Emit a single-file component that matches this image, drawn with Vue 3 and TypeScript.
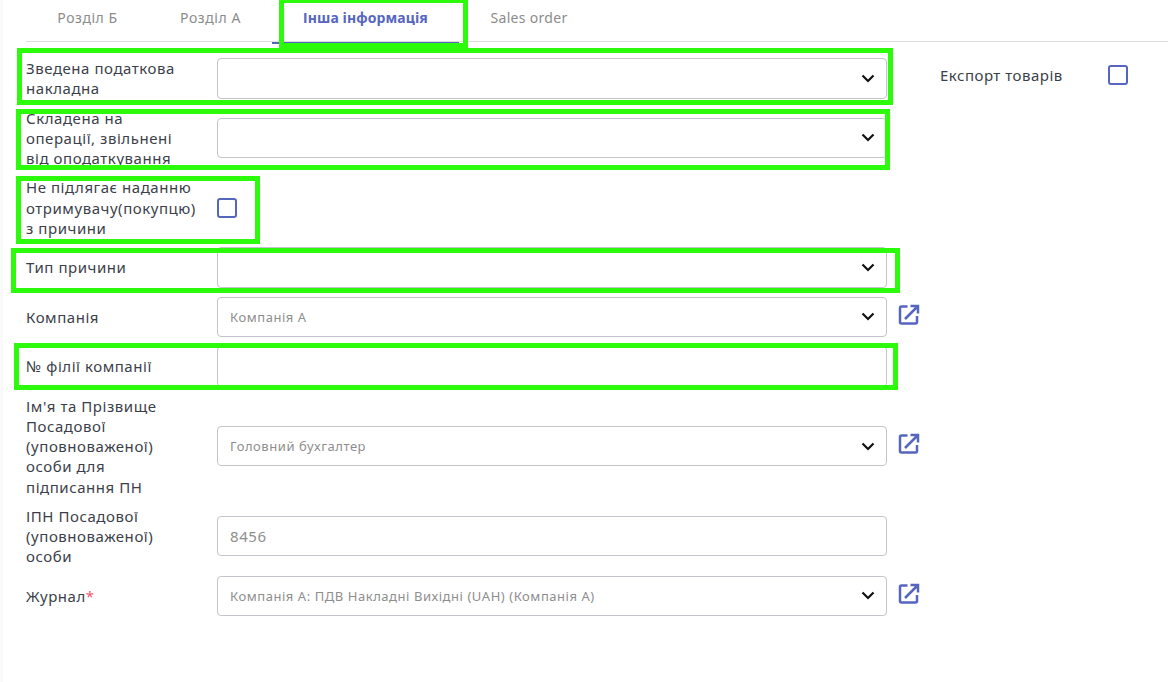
<script setup lang="ts">
interface Row {
  label: string
  kind: 'select' | 'input' | 'check'
  value?: string
  link?: boolean
  big?: boolean
  required?: boolean
}
const tabs = ['Розділ Б', 'Розділ А', 'Інша інформація', 'Sales order']
const rows: Row[] = [
  { label: 'Зведена податкова\nнакладна', kind: 'select' },
  { label: 'Складена на\nоперації, звільнені\nвід оподаткування', kind: 'select' },
  { label: 'Не підлягає наданню\nотримувачу(покупцю)\nз причини', kind: 'check' },
  { label: 'Тип причини', kind: 'select' },
  { label: 'Компанія', kind: 'select', value: 'Компанія А', link: true },
  { label: '№ філії компанії', kind: 'input' },
  { label: "Ім'я та Прізвище\nПосадової\n(уповноваженої)\nособи для\nпідписання ПН", kind: 'select', value: 'Головний бухгалтер', link: true },
  { label: 'ІПН Посадової\n(уповноваженої)\nособи', kind: 'input', value: '8456', big: true },
  { label: 'Журнал', kind: 'select', value: 'Компанія А: ПДВ Накладні Вихідні (UAH) (Компанія А)', link: true, required: true },
]
</script>

<template>
  <div class="page">
    <nav class="tabs">
      <span v-for="(t, i) in tabs" :key="t" class="tab" :class="{ active: i === 2 }">{{ t }}</span>
    </nav>
    <div class="body">
      <div class="form">
        <div v-for="r in rows" :key="r.label" class="row">
          <div class="label">{{ r.label }}<span v-if="r.required" class="req">*</span></div>
          <span v-if="r.kind === 'check'" class="check"></span>
          <div v-else class="field">
            <span class="value" :class="{ big: r.big }">{{ r.value }}</span>
            <svg v-if="r.kind === 'select'" class="chev" width="14" height="9" viewBox="0 0 14 9">
              <path d="M1.500 1.500 7 7l5.500-5.500" fill="none" stroke="#111" stroke-width="2.200" />
            </svg>
          </div>
          <svg v-if="r.link" class="ext" width="22" height="22" viewBox="0 0 22 22">
            <path d="M9.500 2.500H3.500a1.500 1.500 0 0 0-1.500 1.500v14a1.500 1.500 0 0 0 1.500 1.500h14a1.500 1.500 0 0 0 1.500-1.500V12" fill="none" stroke="#5666bf" stroke-width="2.500" />
            <path d="M7 15 19 3M12.500 2H20v7.500" fill="none" stroke="#5666bf" stroke-width="2.500" />
          </svg>
        </div>
      </div>
      <div class="side">
        <span class="side-label">Експорт товарів</span>
        <span class="check"></span>
      </div>
    </div>
    <i class="mark m1"></i>
    <i class="mark m2"></i>
    <i class="mark m3"></i>
    <i class="mark m4"></i>
    <i class="mark m5"></i>
    <i class="mark m6"></i>
  </div>
</template>

<style scoped>
.page {
  position: relative;
  width: 1168px;
  height: 682px;
  overflow: hidden;
  background: #fff;
  font-family: "Noto Sans", "Open Sans", sans-serif;
  font-size: 15px;
  color: #3c3f4a;
  box-sizing: border-box;
  border-left: 3px solid #fafafa;
}
.tabs {
  display: flex;
  align-items: flex-start;
  height: 41px;
  margin-left: 23px;
  border-bottom: 1px solid #dedede;
}
.tab {
  width: 123px;
  padding-top: 8px;
  height: 34px;
  text-align: center;
  font-size: 14px;
  color: #8c8c8c;
  letter-spacing: 0.55px;
  box-sizing: content-box;
  flex: none;
}
.tab:nth-child(3) { width: 187px; }
.tab:nth-child(4) { width: 140px; letter-spacing: 0.3px; }
.tab.active {
  font-weight: 700;
  letter-spacing: 0.1px;
  color: #5666bf;
  border-bottom: 2px solid #5666bf;
}
.body {
  display: flex;
  padding: 16px 0 0 23px;
}
.form {
  width: 914px;
  display: flex;
  flex-direction: column;
  gap: 9px;
}
.row {
  display: flex;
  align-items: center;
  min-height: 40.500px;
}
.label {
  width: 191px;
  flex: none;
  white-space: pre-line;
  line-height: 20.250px;
  letter-spacing: 0.55px;
}
.req { color: #f05a6e; }
.field {
  width: 670px;
  height: 40.500px;
  box-sizing: border-box;
  border: 1px solid #c4c4cc;
  border-radius: 4px;
  display: flex;
  align-items: center;
  justify-content: space-between;
  padding: 0 11px 0 12px;
  flex: none;
}
.value { font-size: 13px; color: #8e8e8e; letter-spacing: 0.55px; }
.value.big { font-size: 15px; letter-spacing: 0.6px; }
.check {
  width: 20px;
  height: 20px;
  box-sizing: border-box;
  border: 2px solid #5666bf;
  border-radius: 3px;
  flex: none;
}
.ext { margin: -4px 0 0 11px; flex: none; }
.side {
  display: flex;
  align-items: center;
  padding-top: 7px;
  height: 20px;
}
.side-label {
  width: 168px;
  letter-spacing: 0.5px;
}
.mark {
  position: absolute;
  border: 5px solid #2cfb0c;
  box-sizing: border-box;
  pointer-events: none;
}
.m1 { left: 276px; top: 0; width: 189px; height: 48px; border-top-width: 3px; }
.m2 { left: 14px; top: 48px; width: 876px; height: 57px; }
.m3 { left: 13px; top: 109px; width: 874px; height: 61px; }
.m4 { left: 13px; top: 176px; width: 244px; height: 68px; }
.m5 { left: 8px; top: 248px; width: 889px; height: 45px; }
.m6 { left: 11px; top: 343px; width: 884px; height: 47px; }
</style>
